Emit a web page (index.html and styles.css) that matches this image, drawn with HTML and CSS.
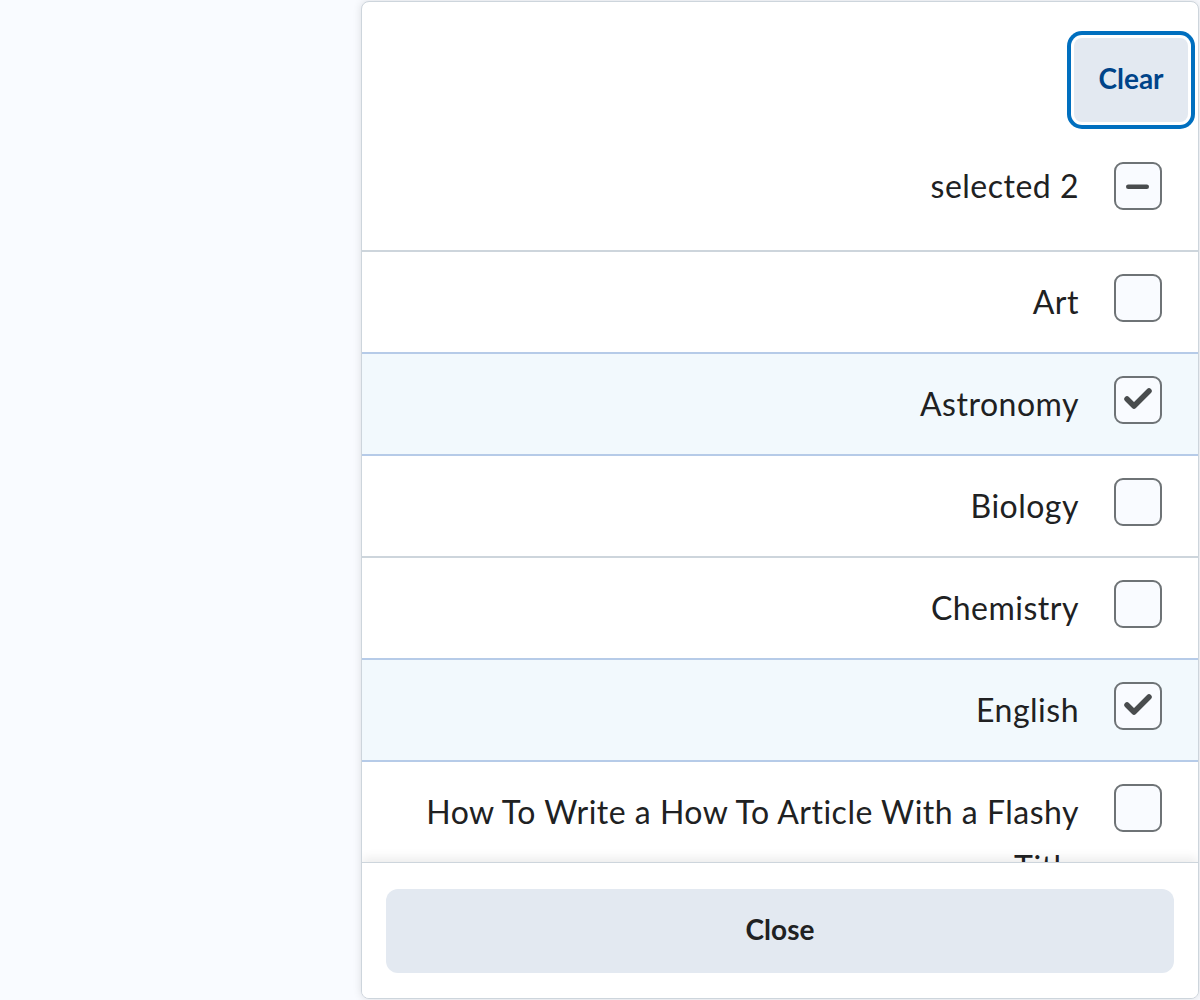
FILE: index.html
```html
<!DOCTYPE html>
<html lang="en">
<head>
<meta charset="utf-8">
<title>Filter</title>
<link rel="stylesheet" href="styles.css">
</head>
<body>
<div class="panel">
  <div class="scroll">
    <div class="head">
      <button class="clear" type="button">Clear</button>
    </div>
    <div class="select-all">
      <span class="label">selected 2</span>
      <span class="box">
        <svg width="48" height="48" viewBox="0 0 48 48"><rect x="12" y="22.5" width="23" height="4.5" rx="2.25" fill="#494c4e"/></svg>
      </span>
    </div>
    <ul class="list">
      <li class="row"><span class="label">Art</span><span class="box"></span></li>
      <li class="row sel"><span class="label">Astronomy</span><span class="box"><svg width="48" height="48" viewBox="0 0 48 48"><path d="M13 23 L20 30 L35 15" fill="none" stroke="#494c4e" stroke-width="5.5" stroke-linecap="round" stroke-linejoin="round"/></svg></span></li>
      <li class="row"><span class="label">Biology</span><span class="box"></span></li>
      <li class="row"><span class="label">Chemistry</span><span class="box"></span></li>
      <li class="row sel"><span class="label">English</span><span class="box"><svg width="48" height="48" viewBox="0 0 48 48"><path d="M13 23 L20 30 L35 15" fill="none" stroke="#494c4e" stroke-width="5.5" stroke-linecap="round" stroke-linejoin="round"/></svg></span></li>
      <li class="row"><span class="label">How To Write a How To Article With a Flashy Title</span><span class="box"></span></li>
      <li class="row"><span class="label">Mathematics</span><span class="box"></span></li>
    </ul>
  </div>
  <div class="footer">
    <button class="close" type="button">Close</button>
  </div>
</div>
</body>
</html>
```

FILE: styles.css
```css
html, body {
  margin: 0;
  padding: 0;
}
body {
  background: #f9fbff;
  font-family: Lato, "Open Sans", "Liberation Sans", sans-serif;
  color: #202122;
  width: 1200px;
  height: 1000px;
  overflow: hidden;
}
.panel {
  box-sizing: border-box;
  margin-left: 361px;
  margin-top: 1px;
  width: 838px;
  height: 998px;
  background: #fff;
  border: 1px solid #cdd5dc;
  border-radius: 8px;
  box-shadow: 0 0 8px rgba(0, 0, 0, 0.12);
  display: flex;
  flex-direction: column;
  overflow: hidden;
}
.scroll {
  flex: 1;
  overflow: hidden;
  min-height: 0;
}
.head {
  display: flex;
  justify-content: flex-end;
  padding: 36px 10px 0 0;
}
.clear {
  width: 114px;
  height: 84px;
  border: none;
  border-radius: 8px;
  background: #e3e9f1;
  color: #004489;
  font-family: inherit;
  font-size: 28px;
  font-weight: 700;
  box-shadow: 0 0 0 3px #fff, 0 0 0 7px #006fbf;
  padding: 0 0 5px;
}
.select-all {
  display: flex;
  justify-content: flex-end;
  align-items: center;
  padding: 40px 36px 40px 0;
  font-size: 32px;
  letter-spacing: 0.5px;
  line-height: 48px;
}
.label {
  margin-right: 35px;
  text-align: right;
}
.box {
  box-sizing: border-box;
  flex: 0 0 48px;
  width: 48px;
  height: 48px;
  border: 2px solid #6e7376;
  border-radius: 9px;
  background: #f9fbff;
  position: relative;
}
.box svg {
  position: absolute;
  left: -2px;
  top: -2px;
}
.list {
  list-style: none;
  margin: 0;
  padding: 0;
}
.row {
  display: flex;
  justify-content: flex-end;
  align-items: flex-start;
  border-top: 2px solid #cdd5dc;
  padding: 22px 36px 23px 24px;
  font-size: 32px;
  letter-spacing: 0.5px;
  line-height: 55px;
}
.row.sel {
  background: #f2f9fd;
  border-top-color: #b6cbe8;
  border-bottom: 2px solid #b6cbe8;
  margin-bottom: -2px;
  position: relative;
}
.footer {
  flex: 0 0 auto;
  border-top: 1px solid #cdd5dc;
  padding: 26px 24px 25px;
  box-shadow: 0 -4px 10px rgba(0, 0, 0, 0.08);
  position: relative;
  background: #fff;
}
.close {
  display: block;
  width: 100%;
  height: 84px;
  border: none;
  border-radius: 12px;
  background: #e3e9f1;
  color: #202122;
  font-family: inherit;
  font-size: 28px;
  font-weight: 700;
  padding: 0 0 5px;
}
```
